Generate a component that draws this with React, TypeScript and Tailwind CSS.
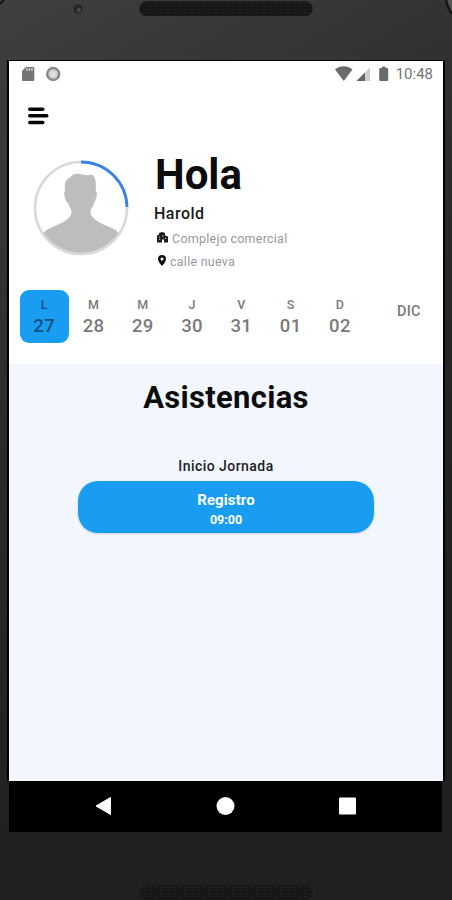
interface Day {
  letter: string;
  number: string;
  active?: boolean;
}

const days: Day[] = [
  { letter: "L", number: "27", active: true },
  { letter: "M", number: "28" },
  { letter: "M", number: "29" },
  { letter: "J", number: "30" },
  { letter: "V", number: "31" },
  { letter: "S", number: "01" },
  { letter: "D", number: "02" },
];

function Speaker({ id }: { id: string }) {
  return (
    <svg width="174" height="16" viewBox="0 0 174 16">
      <defs>
        <pattern id={id} width="3" height="3" patternUnits="userSpaceOnUse">
          <rect width="3" height="3" fill="#161616" />
          <rect width="1" height="1" fill="#2b2b2b" />
        </pattern>
      </defs>
      <rect x="1" y="2" width="172" height="13.5" rx="6.7" fill={`url(#${id})`} stroke="#191919" strokeWidth="1.5" />
    </svg>
  );
}

function StatusBar() {
  return (
    <div className="flex h-[25px] items-center justify-between pl-[13px] pr-[10px]">
      <svg width="40" height="16" viewBox="0 0 40 16">
        <path d="M4 1h7a1.300 1.300 0 0 1 1.300 1.300v11.400A1.300 1.300 0 0 1 11 15H1a1 1 0 0 1-1-1V5z" fill="#757575" />
        <path d="M5 2.300v2.500M7.500 2.300v2.500M10 2.300v2.500" stroke="#e0e0e0" strokeWidth="1.400" />
        <circle cx="31.200" cy="8" r="6" fill="#d0d0d0" stroke="#868686" strokeWidth="2.400" />
        <circle cx="31.200" cy="8" r="3" fill="#dedede" />
      </svg>
      <div className="flex items-center">
        <svg width="54" height="16" viewBox="0 0 54 16">
          <path d="M0 3.500C5-.8 12.500-.8 17.500 3.500L8.800 15z" fill="#6b6b6b" />
          <path d="M35 1.500V15H21.500z" fill="#cfcfcf" />
          <path d="M30 6.500V15H21.500z" fill="#666" />
          <path d="M47 .5h3.500V2H52a1.200 1.200 0 0 1 1.200 1.200v10.600A1.200 1.200 0 0 1 52 15h-6.600a1.200 1.200 0 0 1-1.200-1.200V3.200A1.200 1.200 0 0 1 45.400 2H47z" fill="#6b6b6b" />
        </svg>
        <span className="ml-[7px] text-[15px] leading-4 text-[#757575]">10:48</span>
      </div>
    </div>
  );
}

function Avatar() {
  return (
    <svg width="96" height="96" viewBox="0 0 96 96">
      <defs>
        <clipPath id="avatar-clip">
          <circle cx="48" cy="48" r="46" />
        </clipPath>
      </defs>
      <g clipPath="url(#avatar-clip)">
        <path
          d="M37 18C38 15 42 13.500 46 13.800C49 14.500 54 16 59 14.500C62.500 17 63 21 62.800 26V31C64.500 32 64 36 63 39C62 41 61.500 42 61 43C60.500 47 57 49 57.500 53C59 59 67 63 74 66C81 69 85 71 86 74V96H10V74C11 71 15 69 22 66C29 63 37 59 38.500 53C39 49 36 47 35 43C33 42 31.500 38 31.200 34C31 32 31.500 31 32 31C31.500 25 32 18.500 37 18Z"
          fill="#bdbdbd"
        />
      </g>
      <circle cx="48" cy="48" r="46" fill="none" stroke="#d9d9d9" strokeWidth="2.700" />
      <path d="M48 2A46 46 0 0 1 94 47" fill="none" stroke="#3b82e6" strokeWidth="2.800" />
    </svg>
  );
}

function Profile() {
  return (
    <div className="flex pl-[24px]">
      <div className="pt-[9.5px]">
        <Avatar />
      </div>
      <div className="pl-[25px]">
        <h1 className="pl-px text-[42px] font-bold leading-[50px] text-[#0c0c0c]">Hola</h1>
        <p className="pt-[4px] text-[16px] font-medium leading-5 tracking-[0.5px] text-[#1a1a1a]">Harold</p>
        <div className="flex items-center pl-[3px] pt-[5px]">
          <svg width="11" height="11" viewBox="0 0 11 11" className="mb-[3px]" fill="#1c1c1c">
            <path d="M0 3.500L2 2.500V1L5 0L8 1V3.500L11 4.500V10.500H7V7.500H5V10.500H0z" />
            <path d="M2 5h1.200M2 7.300h1.200M5 4h1.500M8 6.500h1.200" stroke="#fff" strokeWidth=".8" />
          </svg>
          <span className="ml-[4px] text-[12.5px] leading-5 tracking-[0.25px] text-[#999]">Complejo comercial</span>
        </div>
        <div className="flex items-center pl-[4px] pt-[2.500px]">
          <svg width="8" height="11" viewBox="0 0 8 11" className="mb-[3px]">
            <path
              d="M4 0a4 4 0 0 1 4 4c0 3-4 7-4 7S0 7 0 4a4 4 0 0 1 4-4zm0 2.500a1.500 1.500 0 1 0 0 3 1.500 1.500 0 0 0 0-3z"
              fill="#111"
            />
          </svg>
          <span className="ml-[4px] text-[12.5px] leading-5 tracking-[0.25px] text-[#999]">calle nueva</span>
        </div>
      </div>
    </div>
  );
}

function WeekStrip() {
  return (
    <div className="flex items-center pl-[10.5px]">
      {days.map((day, index) => (
        <div
          key={index}
          className={
            day.active
              ? "flex h-[53px] w-[49.3px] flex-col items-center rounded-[9px] bg-[#199df1] pt-[7px] text-[#0e5080]"
              : "flex h-[53px] w-[49.3px] flex-col items-center pt-[7px] text-[#7a7a7a]"
          }
        >
          <span className="text-[12.5px] font-medium leading-[15px]">{day.letter}</span>
          <span className="pt-[3px] text-[18.5px] font-medium leading-[22px] tracking-[0.3px]">{day.number}</span>
        </div>
      ))}
      <span className="ml-[32.5px] pb-[9px] text-[14.5px] font-medium leading-5 tracking-[0.2px] text-[#7a7a7a]">DIC</span>
    </div>
  );
}

function Attendance() {
  return (
    <div className="flex flex-1 flex-col items-center bg-[#f2f6ff]">
      <h2 className="pt-[14px] text-[31px] font-bold leading-10 tracking-[0.3px] text-[#0c0c0c]">Asistencias</h2>
      <p className="pt-[38px] text-[14px] font-medium leading-5 tracking-[0.45px] text-[#1c1c1c]">Inicio Jornada</p>
      <button className="mt-[5px] flex h-[52px] w-[296px] flex-col items-center rounded-[20px] bg-[#199df1] pt-[9px] text-white shadow-[0_1px_2px_rgba(0,0,0,0.15)]">
        <span className="text-[15px] font-bold leading-5 tracking-[0.1px]">Registro</span>
        <span className="text-[12.5px] font-bold leading-5">09:00</span>
      </button>
    </div>
  );
}

export default function App() {
  return (
    <div className="flex h-[900px] w-[452px] flex-col overflow-hidden bg-[linear-gradient(150deg,#3f3f41_0%,#2a2a2a_40%,#202020_75%)] font-['Roboto',sans-serif]">
      <div className="relative flex h-[60px] justify-center">
        <Speaker id="grille-top" />
        <svg width="14" height="14" viewBox="0 0 14 14" className="absolute left-[71px] top-[2px]">
          <circle cx="7" cy="7" r="5.500" fill="#28282a" stroke="#454547" />
          <circle cx="8" cy="8" r="2" fill="#4b4b52" />
        </svg>
        {/* rounded corners of the case */}
        <svg width="6" height="6" className="absolute left-0 top-0">
          <path d="M0 4L4 0" stroke="#111" strokeWidth="2" />
        </svg>
        <svg width="8" height="20" className="absolute right-0 top-0">
          <path d="M3 0H8V12z" fill="#555" />
          <path d="M2 0Q4 9 8 14" fill="none" stroke="#111" strokeWidth="2" />
        </svg>
      </div>
      <div className="ml-[7px] flex h-[721px] w-[438px] flex-col border-x-2 border-t border-black bg-white">
        <StatusBar />
        <div className="h-[64px] pl-[19px] pt-[20.5px]">
          <svg width="21" height="18" viewBox="0 0 21 18">
            <path d="M1.800 2.200h13M1.800 8.800h17M1.800 15.500h13" stroke="#050505" strokeWidth="3.500" strokeLinecap="round" />
          </svg>
        </div>
        <div className="h-[140px]">
          <Profile />
        </div>
        <div className="h-[74px]">
          <WeekStrip />
        </div>
        <Attendance />
      </div>
      <div className="ml-[9px] flex h-[51px] w-[433px] items-center bg-black">
        <svg width="433" height="51" viewBox="0 0 433 51" fill="#fff">
          <path d="M101.500 16.500v17L87 25z" stroke="#fff" strokeLinejoin="round" />
          <circle cx="216.500" cy="25" r="9" />
          <rect x="330" y="16.500" width="17" height="17" rx="1" />
        </svg>
      </div>
      <div className="flex flex-1 items-end justify-center">
        <Speaker id="grille-bottom" />
      </div>
    </div>
  );
}
